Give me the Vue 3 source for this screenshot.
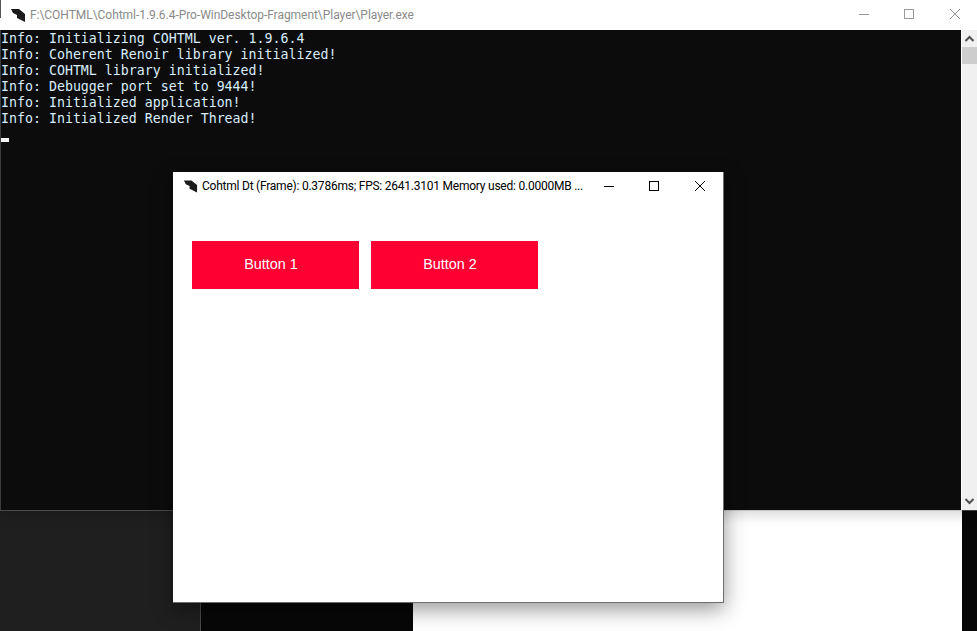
<script setup>
const lines = [
  'Info: Initializing COHTML ver. 1.9.6.4',
  'Info: Coherent Renoir library initialized!',
  'Info: COHTML library initialized!',
  'Info: Debugger port set to 9444!',
  'Info: Initialized application!',
  'Info: Initialized Render Thread!'
]
</script>

<template>
  <div class="desktop">
    <div class="strip">
      <div class="s-dark"></div>
      <div class="s-black"></div>
      <div class="s-white"></div>
      <div class="s-end"></div>
    </div>

    <section class="win console">
      <header class="titlebar con-title">
        <svg class="logo" width="16" height="14" viewBox="0 0 16 14"><path d="M1 1 L9 1 L15 6 L15 14 L7 10 L7 7 L3 5 Z" fill="#1c1c1c"/></svg>
        <span class="con-text">F:\COHTML\Cohtml-1.9.6.4-Pro-WinDesktop-Fragment\Player\Player.exe</span>
        <div class="ctrls">
          <svg class="ctrl" width="46" height="30" viewBox="0 0 46 30"><path d="M19 14.5 H29" stroke="#999" fill="none"/></svg>
          <svg class="ctrl" width="46" height="30" viewBox="0 0 46 30"><rect x="18.5" y="9.5" width="9" height="9" stroke="#999" stroke-width="1" fill="none"/></svg>
          <svg class="ctrl" width="46" height="30" viewBox="0 0 46 30"><path d="M18 9 L28 19 M28 9 L18 19" stroke="#999" fill="none"/></svg>
        </div>
      </header>
      <div class="con-body">
        <div class="output">
          <div v-for="l in lines" :key="l" class="line">{{ l }}</div>
          <div class="cursor"></div>
        </div>
        <div class="scrollbar">
          <svg width="15" height="17" viewBox="0 0 15 17"><path d="M3.5 11 L7.5 7 L11.5 11" stroke="#505050" stroke-width="2" fill="none"/></svg>
          <div class="thumb"></div>
          <div class="track"></div>
          <svg width="15" height="17" viewBox="0 0 15 17"><path d="M3.5 6 L7.5 10 L11.5 6" stroke="#505050" stroke-width="2" fill="none"/></svg>
        </div>
      </div>
    </section>

    <section class="win app">
      <header class="titlebar app-title">
        <svg class="logo2" width="15" height="14" viewBox="0 0 16 14"><path d="M1 1 L9 1 L15 6 L15 14 L7 10 L7 7 L3 5 Z" fill="#1c1c1c"/></svg>
        <span class="app-text">Cohtml Dt (Frame): 0.3786ms; FPS: 2641.3101 Memory used: 0.0000MB ...</span>
        <div class="ctrls">
          <svg class="ctrl" width="46" height="28" viewBox="0 0 46 28"><path d="M19 14.5 H29" stroke="#000" fill="none"/></svg>
          <svg class="ctrl" width="46" height="28" viewBox="0 0 46 28"><rect x="18.5" y="9.5" width="9" height="9" stroke="#000" stroke-width="1" fill="none"/></svg>
          <svg class="ctrl" width="46" height="28" viewBox="0 0 46 28"><path d="M18 9 L28 19 M28 9 L18 19" stroke="#000" fill="none"/></svg>
        </div>
      </header>
      <div class="app-body">
        <button class="btn">Button 1</button>
        <button class="btn">Button 2</button>
      </div>
    </section>
  </div>
</template>

<style>
html, body { margin: 0; overflow: hidden; background: #fff; }
</style>

<style scoped>
.desktop {
  position: relative;
  width: 977px;
  height: 631px;
  overflow: hidden;
  background: #fff;
  display: flex;
  flex-direction: column;
  justify-content: flex-end;
}
.strip { display: flex; height: 121px; }
.s-dark { width: 200px; background: #1f1f1f; border-right: 1px solid #4a4a4a; }
.s-black { width: 212px; background: #070707; }
.s-white { width: 549px; background: #fff; }
.s-end { flex: 1; background: #070707; }

.win { position: absolute; box-sizing: border-box; }
.console {
  left: 0; top: 0; width: 977px; height: 511px;
  border-bottom: 1px solid rgba(128, 128, 128, .45);
  box-shadow: 0 4px 12px rgba(0, 0, 0, .16);
  display: flex;
  flex-direction: column;
}
.titlebar { display: flex; align-items: center; flex-shrink: 0; background: #fff; }
.con-title { height: 30px; position: relative; }
.con-title::before {
  content: "";
  position: absolute;
  left: 0; top: 0;
  width: 1px; height: 18px;
  background: #555;
}
.logo, .logo2 { flex-shrink: 0; margin-left: 10px; margin-top: -1px; }
.con-text, .app-text {
  margin-left: 4px;
  font: 12px Roboto, "Liberation Sans", sans-serif;
  white-space: nowrap;
}
.con-text { color: #8a8a8a; letter-spacing: -0.04px; }
.app-text { color: #000; letter-spacing: -0.23px; }
.ctrls { margin-left: auto; display: flex; flex-shrink: 0; }
.console .ctrls { margin-right: -1px; }
.ctrl { display: block; }

.con-body { flex: 1; display: flex; min-height: 0; background: #fff; }
.output {
  width: 961px;
  margin-right: 1px;
  box-sizing: border-box;
  background: #0c0c0c;
  border-left: 1px solid #3c3c3c;
  font: 13.28px/16px "DejaVu Sans Mono", monospace;
  color: #d8ecfa;
  white-space: pre;
  padding-top: 1px;
}
.line { height: 16px; }
.cursor { width: 8px; height: 4px; margin-top: 11px; background: #f2f2f2; }

.scrollbar { flex: 1; display: flex; flex-direction: column; background: #f0f0f0; }
.scrollbar svg { display: block; flex-shrink: 0; }
.thumb { height: 17px; background: #cdcdcd; }
.track { flex: 1; }

.app {
  left: 173px; top: 172px; width: 551px; height: 431px;
  background: #fff;
  border-right: 1px solid #6e6e6e;
  border-bottom: 1px solid #6e6e6e;
  box-shadow: 0 6px 20px rgba(0, 0, 0, .42);
}
.app-title { height: 28px; }
.app-body { display: flex; gap: 12px; padding: 41px 0 0 19px; }
.btn {
  width: 167px;
  height: 48px;
  border: 0;
  padding: 0 9px 2px 0;
  background: #ff0033;
  color: #fff;
  font: 14.4px "Liberation Sans", Arial, sans-serif;
}
</style>
